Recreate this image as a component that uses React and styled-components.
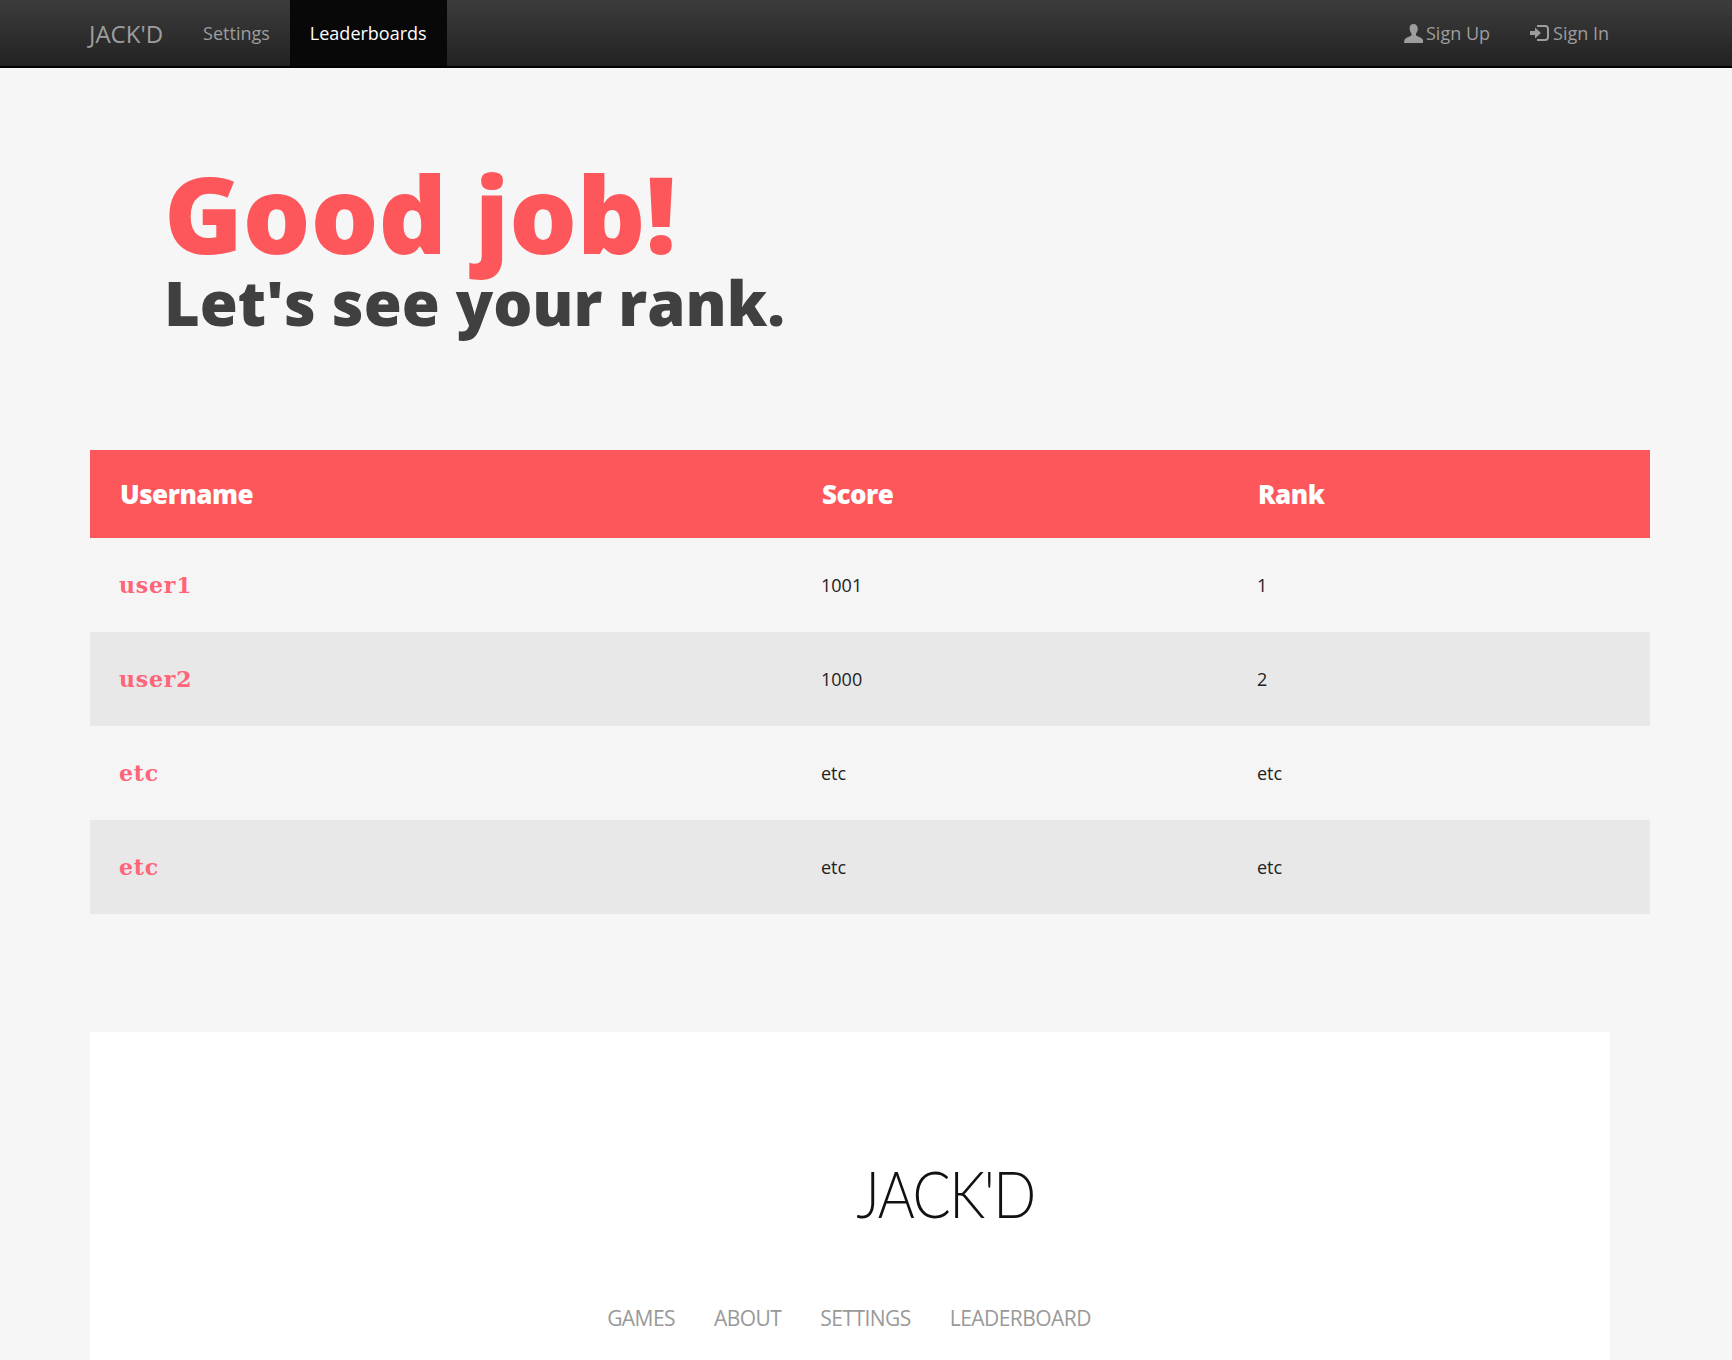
import React from "react";
import styled, { createGlobalStyle } from "styled-components";

const GlobalStyle = createGlobalStyle`
  html, body {
    margin: 0;
    padding: 0;
    background: #f6f6f6;
    font-family: "Open Sans", sans-serif;
    overflow: hidden;
  }
`;

const rows = [
  { name: "user1", score: "1001", rank: "1" },
  { name: "user2", score: "1000", rank: "2" },
  { name: "etc", score: "etc", rank: "etc" },
  { name: "etc", score: "etc", rank: "etc" },
];

const App = () => (
  <Page>
    <GlobalStyle />
    <Navbar>
      <NavGroup>
        <Brand>JACK'D</Brand>
        <NavLink>Settings</NavLink>
        <NavLink $active>Leaderboards</NavLink>
      </NavGroup>
      <NavGroup>
        <NavLink>
          <UserIcon />
          Sign Up
        </NavLink>
        <NavLink>
          <LoginIcon />
          Sign In
        </NavLink>
      </NavGroup>
    </Navbar>

    <Hero>
      <Title>Good job!</Title>
      <Subtitle>Let's see your rank.</Subtitle>
    </Hero>

    <Table>
      <thead>
        <tr>
          <Th $w={702}>Username</Th>
          <Th $w={436}>Score</Th>
          <Th>Rank</Th>
        </tr>
      </thead>
      <tbody>
        {rows.map((row, i) => (
          <Row key={i} $odd={i % 2 === 1}>
            <NameCell>{row.name}</NameCell>
            <Td>{row.score}</Td>
            <Td>{row.rank}</Td>
          </Row>
        ))}
      </tbody>
    </Table>

    <Footer>
      <Logo>JACK'D</Logo>
      <FooterNav>
        <FooterLink>GAMES</FooterLink>
        <FooterLink>ABOUT</FooterLink>
        <FooterLink>SETTINGS</FooterLink>
        <FooterLink>LEADERBOARD</FooterLink>
      </FooterNav>
    </Footer>
  </Page>
);

export default App;

const UserIcon = () => (
  <Icon viewBox="0 0 19 19" width="19" height="19">
    <path
      fill="currentColor"
      d="M9.500 0c2.700 0 4.300 2.100 4.300 4.800 0 2-.8 3.700-1.800 4.700v1.500c0 .7 1.200 1.100 3.100 1.900 1.800.8 3.400 1.500 3.900 3.100l.5 3H0l.5-3c.5-1.600 2.100-2.300 3.900-3.100C6.300 12.100 7.500 11.700 7.500 11V9.500c-1-1-1.800-2.700-1.800-4.700C5.200 2.100 6.800 0 9.500 0z"
    />
  </Icon>
);

const LoginIcon = () => (
  <Icon viewBox="0 0 20 18" width="20" height="18">
    <path fill="currentColor" d="M0 7h5V3.600L11 9l-6 5.400V11H0z" />
    <path
      fill="none"
      stroke="currentColor"
      strokeWidth="2"
      d="M7 2h8a3 3 0 0 1 3 3v8a3 3 0 0 1-3 3H7"
    />
  </Icon>
);

const Page = styled.div`
  width: 1732px;
  height: 1360px;
  overflow: hidden;
`;

const Navbar = styled.nav`
  height: 66px;
  padding: 0 103px 0 68px;
  display: flex;
  justify-content: space-between;
  background: linear-gradient(to bottom, #3c3c3c, #222222);
  border-bottom: 2px solid #000;
`;

const NavGroup = styled.div`
  display: flex;
`;

const Brand = styled.a`
  display: flex;
  align-items: center;
  padding: 0 20px 0 21px;
  font-size: 24px;
  color: #9d9d9d;
`;

const NavLink = styled.a`
  display: flex;
  align-items: center;
  padding: 0 20px;
  font-size: 18px;
  color: ${(p) => (p.$active ? "#ffffff" : "#9d9d9d")};
  background: ${(p) => (p.$active ? "#080808" : "transparent")};
`;

const Icon = styled.svg`
  margin-right: 3px;
  display: block;
`;

const Hero = styled.header`
  padding: 92px 0 0 164px;
  height: 314px;
  box-sizing: border-box;
`;

const Title = styled.h1`
  margin: 0;
  font-size: 106.5px;
  line-height: 106px;
  font-weight: 800;
  color: #fd575b;
`;

const Subtitle = styled.h2`
  margin: 1px 0 0;
  font-size: 61.5px;
  line-height: 70px;
  font-weight: 800;
  color: #404040;
`;

const Table = styled.table`
  margin: 68px 0 0 90px;
  width: 1560px;
  border-collapse: collapse;
  table-layout: fixed;
`;

const Th = styled.th`
  ${(p) => (p.$w ? `width: ${p.$w}px;` : "")}
  height: 88px;
  padding: 0 0 0 30px;
  box-sizing: border-box;
  background: #fd575b;
  color: #ffffff;
  text-align: left;
  font-size: 26px;
  font-weight: 800;
  letter-spacing: -0.5px;
`;

const Row = styled.tr`
  height: 94px;
  background: ${(p) => (p.$odd ? "#e8e8e8" : "#f5f5f5")};
`;

const Td = styled.td`
  padding: 0 0 0 29px;
  font-size: 18px;
  color: #222222;
`;

const NameCell = styled.td`
  padding: 0 0 0 29px;
  font-family: "DejaVu Serif", serif;
  font-size: 22px;
  font-weight: 700;
  letter-spacing: 0.8px;
  color: #ff6479;
`;

const Footer = styled.footer`
  margin: 118px 0 0 90px;
  width: 1520px;
  height: 330px;
  background: #ffffff;
  display: flex;
  flex-direction: column;
  align-items: center;
`;

const Logo = styled.div`
  margin: 126px 0 0 191px;
  font-family: "Lato", sans-serif;
  font-weight: 300;
  font-size: 65px;
  line-height: 70px;
  letter-spacing: -1.7px;
  color: #111111;
  transform: scaleX(0.87);
`;

const FooterNav = styled.div`
  margin: 76px 0 0 -2px;
  display: flex;
  gap: 39px;
`;

const FooterLink = styled.a`
  font-size: 21px;
  letter-spacing: -0.55px;
  color: #999999;
`;
